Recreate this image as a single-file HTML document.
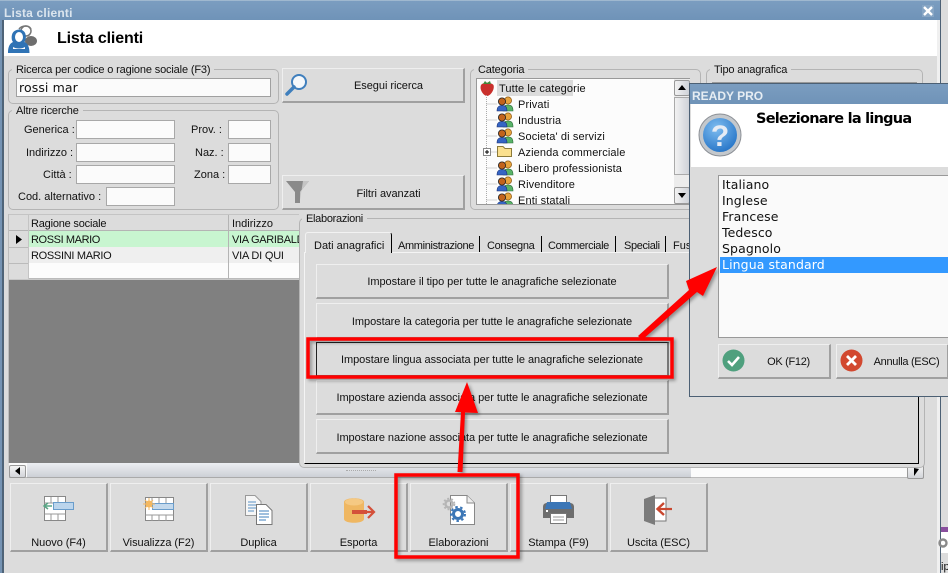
<!DOCTYPE html>
<html><head><meta charset="utf-8"><style>
html,body{margin:0;padding:0;width:948px;height:573px;overflow:hidden;background:#dcdcdc}
body{position:relative;font:11px "Liberation Sans",sans-serif;color:#111}
.a,.b,.i,.g,.t,.btn{position:absolute;box-sizing:border-box}
.t{white-space:nowrap;line-height:14px;margin-top:1px}
#tree .t{letter-spacing:.12px}
.tab{letter-spacing:-.35px}
.g{border:1px solid #b4b4b4;border-radius:5px}
.l{position:absolute;background:#dcdcdc;padding:0 4px;line-height:13px;top:-6px;white-space:nowrap;letter-spacing:-.15px;margin-left:-1px}
.i{background:#fbfbfb;border:1px solid #a8a8a8}
.btn{background:#dcdcdc;border-top:1px solid #efefef;border-left:1px solid #efefef;border-right:2px solid #a0a0a0;border-bottom:2px solid #a0a0a0;text-align:center;letter-spacing:-.05px;padding-top:1px}
.m{font-family:"DejaVu Sans",sans-serif;font-size:12.5px;line-height:16px;position:absolute;white-space:nowrap;letter-spacing:.1px}
svg{position:absolute;overflow:visible}
</style></head><body>
<svg width="0" height="0" style="position:absolute"><defs>
<g id="ppl"><circle cx="11" cy="4.5" r="3.6" fill="#e8a33c" stroke="#8a5a1a" stroke-width=".7"/><path d="M6 15c0-5 2-6 5-6s5 1 5 6z" fill="#58b368" stroke="#2d6e3a" stroke-width=".6"/><circle cx="5" cy="5.5" r="3.6" fill="#c2631c" stroke="#222" stroke-width=".8"/><path d="M0 15c0-4.500 2-5.500 5-5.500s5 1 5 5.500z" fill="#3565c4" stroke="#1b2f70" stroke-width=".6"/></g>
</defs></svg>

<!-- window chrome -->
<div class="a" style="left:0;top:0;width:941px;height:20px;background:linear-gradient(#7b9dc0,#6f93b8);border-top:1px solid #9fb8cf"></div>
<div class="a" style="left:0;top:20px;width:4px;height:553px;background:#7593b3"></div>
<div class="a" style="left:2px;top:20px;width:2px;height:553px;background:#4f6478"></div>
<div class="t" style="left:4px;top:5px;color:#dbe5ee;font-size:12px;font-weight:bold;letter-spacing:.2px">Lista clienti</div>
<div class="a" style="left:4px;top:20px;width:933px;height:36px;background:#fff"></div>
<div class="a" style="left:937px;top:20px;width:3px;height:553px;background:#f0f0f0"></div>
<div class="a" style="left:940px;top:0;width:1px;height:573px;background:#4c6074"></div>
<div class="a" style="left:922px;top:5px;width:12px;height:12px;background:#86a5c4"></div>
<svg style="left:924px;top:7px" width="8" height="8"><path d="M0 0L8 8M8 0L0 8" stroke="#fff" stroke-width="2.400"/></svg>
<svg style="left:7px;top:23px" width="30" height="30"><circle cx="19" cy="8" r="5" fill="#fff" stroke="#777" stroke-width="1.500"/><path d="M12 6c3-4 10-4 12 0" fill="none" stroke="#777" stroke-width="1.500"/><ellipse cx="24" cy="18" rx="6" ry="5" fill="#6e6e6e"/><path d="M1 30c0-8 3-10 5-11-2-2-2-9 1.500-11 3-2 7-2 9 0 3 2 3 9 1 11 2 1 5 3 5 11z" fill="#2f73b5"/><ellipse cx="12" cy="14" rx="4" ry="5" fill="#fff"/><path d="M6 24c3 2 9 2 12 0v2H6z" fill="#fff"/></svg>
<div class="t" style="left:57px;top:29px;font-size:16px;line-height:18px;font-weight:bold;color:#000;letter-spacing:-.15px">Lista clienti</div>

<!-- search groups -->
<div class="g" style="left:8px;top:69px;width:271px;height:35px"><div class="l" style="left:4px">Ricerca per codice o ragione sociale (F3)</div></div>
<div class="i" style="left:16px;top:78px;width:255px;height:19px;border:1px solid #a0a0a0"></div>
<div class="m" style="left:19px;top:80px">rossi mar</div>
<div class="g" style="left:8px;top:110px;width:271px;height:100px"><div class="l" style="left:4px">Altre ricerche</div></div>
<div class="i" style="left:76px;top:120px;width:99px;height:19px"></div>
<div class="i" style="left:76px;top:143px;width:99px;height:19px"></div>
<div class="i" style="left:76px;top:165px;width:99px;height:19px"></div>
<div class="i" style="left:106px;top:187px;width:69px;height:19px"></div>
<div class="i" style="left:228px;top:120px;width:43px;height:19px"></div>
<div class="i" style="left:228px;top:143px;width:43px;height:19px"></div>
<div class="i" style="left:228px;top:165px;width:43px;height:19px"></div>
<div class="t" style="left:24px;top:122px">Generica :</div>
<div class="t" style="left:26px;top:145px">Indirizzo :</div>
<div class="t" style="left:43px;top:167px">Città :</div>
<div class="t" style="left:18px;top:189px">Cod. alternativo :</div>
<div class="t" style="left:191px;top:122px">Prov. :</div>
<div class="t" style="left:195px;top:145px">Naz. :</div>
<div class="t" style="left:194px;top:167px">Zona :</div>

<!-- action buttons -->
<div class="btn" style="left:282px;top:68px;width:183px;height:35px;line-height:33px;padding-left:31px">Esegui ricerca</div>
<svg style="left:285px;top:73px" width="24" height="24"><circle cx="14" cy="9" r="7" fill="#f5f8fb" stroke="#3f7fbd" stroke-width="2"/><path d="M9 14L2 21" stroke="#3f7fbd" stroke-width="3.500" stroke-linecap="round"/></svg>
<div class="btn" style="left:282px;top:175px;width:183px;height:35px;line-height:34px;padding-left:31px">Filtri avanzati</div>
<svg style="left:285px;top:180px" width="24" height="24"><path d="M1 1H24L15 12V23H10V12Z" fill="#8a8a8a"/><path d="M18 1H24L15 12V20Z" fill="#c4c4c4"/></svg>

<!-- categoria -->
<div class="g" style="left:470px;top:69px;width:231px;height:141px"><div class="l" style="left:4px">Categoria</div></div>
<div class="a" style="left:476px;top:78px;width:214px;height:127px;background:#fcfcfc;border:1px solid #999;overflow:hidden" id="tree">
<div class="a" style="left:20px;top:1px;width:76px;height:16px;background:#dcdcdc"></div>
<svg style="left:3px;top:2px" width="15" height="15"><path d="M1 4C3 1 11 1 13.500 4 15 9 10 15 7 15 4 15-1 9 1 4Z" fill="#c9302c"/><path d="M3 3L5 0 7 2 10 0 11 3Z" fill="#3f8a3a"/></svg>
<div class="t" style="left:22px;top:2px">Tutte le categorie</div>
<svg style="left:9px;top:16px" width="20" height="125"><path d="M.5 0V118M.5 9H11M.5 25H11M.5 41H11M.5 57H11M.5 73H11M.5 89H11M.5 105H11M.5 121H11" stroke="#aaa" stroke-dasharray="1 1" fill="none"/></svg>
<svg style="left:20px;top:17px" width="16" height="16"><use href="#ppl"/></svg>
<svg style="left:20px;top:33px" width="16" height="16"><use href="#ppl"/></svg>
<svg style="left:20px;top:49px" width="16" height="16"><use href="#ppl"/></svg>
<svg style="left:20px;top:81px" width="16" height="16"><use href="#ppl"/></svg>
<svg style="left:20px;top:97px" width="16" height="16"><use href="#ppl"/></svg>
<svg style="left:20px;top:113px" width="16" height="16"><use href="#ppl"/></svg>
<svg style="left:20px;top:65px" width="16" height="14"><path d="M.5 2.500H6L8 4.500H14.500V12.500H.5Z" fill="#fbe08e" stroke="#8c7a3a"/></svg>
<svg style="left:6px;top:69px" width="8" height="8"><rect x=".5" y=".5" width="7" height="7" fill="#fff" stroke="#888"/><path d="M2 4H6M4 2V6" stroke="#000"/></svg>
<div class="t" style="left:41px;top:18px">Privati</div>
<div class="t" style="left:41px;top:34px">Industria</div>
<div class="t" style="left:41px;top:50px">Societa' di servizi</div>
<div class="t" style="left:41px;top:66px">Azienda commerciale</div>
<div class="t" style="left:41px;top:82px">Libero professionista</div>
<div class="t" style="left:41px;top:98px">Rivenditore</div>
<div class="t" style="left:41px;top:114px">Enti statali</div>
</div>
<div class="a" style="left:674px;top:79px;width:16px;height:125px;background:#ececec"></div>
<div class="a" style="left:674px;top:80px;width:16px;height:16px;background:linear-gradient(90deg,#f2f2f2,#cfd2d8);border:1px solid #999;border-radius:2px"></div>
<div class="a" style="left:674px;top:97px;width:16px;height:78px;background:linear-gradient(90deg,#f2f2f2,#cfd2d8);border:1px solid #aaa"></div>
<div class="a" style="left:674px;top:187px;width:16px;height:17px;background:linear-gradient(90deg,#f2f2f2,#cfd2d8);border:1px solid #999;border-radius:2px"></div>
<svg style="left:678px;top:85px" width="8" height="5"><path d="M0 5L4 0L8 5Z" fill="#000"/></svg>
<svg style="left:678px;top:193px" width="8" height="5"><path d="M0 0L4 5L8 0Z" fill="#000"/></svg>

<!-- tipo anagrafica -->
<div class="g" style="left:706px;top:69px;width:217px;height:141px"><div class="l" style="left:4px">Tipo anagrafica</div></div>
<div class="a" style="left:712px;top:82px;width:205px;height:2px;background:#999"></div>

<!-- grid -->
<div class="a" style="left:9px;top:280px;width:290px;height:183px;background:#808080"></div>
<div class="a" style="left:8px;top:214px;width:291px;height:1px;background:#c4c4c4"></div>
<div class="a" style="left:8px;top:214px;width:1px;height:249px;background:#bdbdbd"></div>
<div class="a" style="left:9px;top:215px;width:290px;height:16px;background:#dcdcdc;border-bottom:1px solid #b4b4b4"></div>
<div class="a" style="left:29px;top:231px;width:270px;height:16px;background:#c8f5d0"></div>
<div class="a" style="left:29px;top:247px;width:270px;height:16px;background:#efefef"></div>
<div class="a" style="left:29px;top:263px;width:270px;height:16px;background:#fcfcfc;border-bottom:1px solid #bbb"></div>
<div class="a" style="left:9px;top:231px;width:20px;height:48px;background:#dcdcdc"></div>
<div class="a" style="left:9px;top:247px;width:20px;height:1px;background:#bbb"></div>
<div class="a" style="left:9px;top:263px;width:20px;height:1px;background:#bbb"></div>
<div class="a" style="left:9px;top:279px;width:290px;height:1px;background:#c8c8c8"></div>
<div class="a" style="left:28px;top:215px;width:1px;height:64px;background:#c4c4c4"></div>
<div class="a" style="left:228px;top:215px;width:1px;height:64px;background:#b4b4b4"></div>
<svg style="left:16px;top:235px" width="6" height="9"><path d="M0 0L6 4.500L0 9Z" fill="#000"/></svg>
<div class="t" style="left:31px;top:216px;letter-spacing:-.2px">Ragione sociale</div>
<div class="t" style="left:232px;top:216px">Indirizzo</div>
<div class="t" style="left:31px;top:232px;letter-spacing:-.4px">ROSSI MARIO</div>
<div class="a" style="left:229px;top:232px;width:70px;height:15px;overflow:hidden"><div class="t" style="left:3px;top:0;letter-spacing:-.3px">VIA GARIBALDI</div></div>
<div class="t" style="left:31px;top:248px;letter-spacing:-.3px">ROSSINI MARIO</div>
<div class="t" style="left:232px;top:248px;letter-spacing:-.2px">VIA DI QUI</div>

<!-- horizontal scrollbar -->
<div class="a" style="left:9px;top:463px;width:915px;height:15px;background:#fbfbfb;border-bottom:1px solid #bbb"></div>
<div class="a" style="left:27px;top:463px;width:664px;height:15px;background:linear-gradient(#eceef2,#cdd0d6);border-bottom:1px solid #aaa"></div>
<div class="a" style="left:9px;top:465px;width:17px;height:13px;background:linear-gradient(#f4f4f4,#d2d4d9);border:1px solid #999;border-radius:2px"></div>
<svg style="left:15px;top:467px" width="5" height="8"><path d="M5 0L0 4L5 8Z" fill="#000"/></svg>
<div class="a" style="left:907px;top:465px;width:17px;height:14px;background:linear-gradient(#f4f4f4,#d2d4d9);border:1px solid #999;border-radius:2px"></div>
<svg style="left:914px;top:468px" width="5" height="8"><path d="M0 0L5 1L0 8Z" fill="#000"/></svg>

<!-- elaborazioni -->
<div class="g" style="left:299px;top:218px;width:626px;height:250px;background:#dcdcdc;z-index:1"><div class="l" style="left:3px;top:-6px;letter-spacing:-.3px">Elaborazioni</div></div>
<div style="position:absolute;left:0;top:0;z-index:2">
<div class="a" style="left:304px;top:252px;width:615px;height:212px;border-top:1px solid #f4f4f4;border-left:1px solid #f4f4f4;border-right:1px solid #000;border-bottom:1px solid #000"></div>
<div class="a" style="left:305px;top:232px;width:87px;height:21px;background:#dcdcdc;border-top:1px solid #f2f2f2;border-left:1px solid #f2f2f2;border-right:1px solid #000;border-radius:3px 3px 0 0"></div>
<div class="t" style="left:314px;top:238px">Dati anagrafici</div>
<div class="t tab" style="left:398px;top:238px">Amministrazione</div>
<div class="a" style="left:479px;top:236px;width:1px;height:16px;background:#000"></div>
<div class="t tab" style="left:487px;top:238px">Consegna</div>
<div class="a" style="left:541px;top:236px;width:1px;height:16px;background:#000"></div>
<div class="t tab" style="left:548px;top:238px">Commerciale</div>
<div class="a" style="left:615px;top:236px;width:1px;height:16px;background:#000"></div>
<div class="t tab" style="left:624px;top:238px">Speciali</div>
<div class="a" style="left:665px;top:236px;width:1px;height:16px;background:#000"></div>
<div class="t" style="left:673px;top:238px">Fus</div>
<div class="btn" style="left:316px;top:264px;width:353px;height:35px;line-height:33px">Impostare il tipo per tutte le anagrafiche selezionate</div>
<div class="btn" style="left:316px;top:303px;width:353px;height:36px;line-height:34px">Impostare la categoria per tutte le anagrafiche selezionate</div>
<div class="btn" style="left:316px;top:342px;width:353px;height:35px;line-height:32px;border:1px solid #222;border-right:2px solid #777;border-bottom:2px solid #777">Impostare lingua associata per tutte le anagrafiche selezionate</div>
<div class="btn" style="left:316px;top:380px;width:353px;height:35px;line-height:33px">Impostare azienda associata per tutte le anagrafiche selezionate</div>
<div class="btn" style="left:316px;top:419px;width:353px;height:35px;line-height:34px">Impostare nazione associata per tutte le anagrafiche selezionate</div>
</div>

<!-- bottom buttons -->
<div style="position:absolute;left:0;top:0;z-index:2">
<div class="btn" style="left:10px;top:483px;width:98px;height:69px;padding-top:52px;line-height:14px">Nuovo (F4)</div>
<div class="btn" style="left:110px;top:483px;width:98px;height:69px;padding-top:52px;line-height:14px">Visualizza (F2)</div>
<div class="btn" style="left:210px;top:483px;width:98px;height:69px;padding-top:52px;line-height:14px">Duplica</div>
<div class="btn" style="left:310px;top:483px;width:98px;height:69px;padding-top:52px;line-height:14px">Esporta</div>
<div class="btn" style="left:410px;top:483px;width:98px;height:69px;padding-top:52px;line-height:14px">Elaborazioni</div>
<div class="btn" style="left:510px;top:483px;width:98px;height:69px;padding-top:52px;line-height:14px">Stampa (F9)</div>
<div class="btn" style="left:610px;top:483px;width:98px;height:69px;padding-top:52px;line-height:14px">Uscita (ESC)</div>
<!-- nuovo -->
<svg style="left:43px;top:496px" width="32" height="26"><rect x="1.500" y=".500" width="21" height="24" fill="#fff" stroke="#888"/><path d="M1.500 7H22.500M1.500 18H22.500M8 1V7M15 1V7M8 18V24M15 18V24" stroke="#999"/><rect x="10.500" y="6.500" width="20" height="7" fill="#bcd5ec" stroke="#6a9dcb"/><path d="M1 10H9M5 7L1 10L5 13" fill="none" stroke="#5aa585" stroke-width="1.500"/></svg>
<!-- visualizza -->
<svg style="left:144px;top:497px" width="31" height="26"><rect x="1.500" y=".500" width="28" height="23" fill="#fff" stroke="#888"/><path d="M1.500 7H29.500M1.500 18H29.500M8 1V7M15 1V7M22 1V7M8 18V24M15 18V24M22 18V24" stroke="#999"/><rect x="8.500" y="6.500" width="21" height="6" fill="#c4d9ec" stroke="#6a9dcb"/><circle cx="5" cy="7" r="3.500" fill="#f4b860"/><path d="M5 1V13M-1 7H11M1 3L9 11M9 3L1 11" stroke="#f4b860"/></svg>
<!-- duplica -->
<svg style="left:245px;top:495px" width="28" height="30"><path d="M.5.500H10L16 6.500V20.500H.5Z" fill="#f6f6f6" stroke="#999"/><path d="M3 7H11M3 10H11M3 13H11M3 16H9" stroke="#5b93c7"/><path d="M11.500 9.500H21L27 15.500V29.500H11.500Z" fill="#fff" stroke="#777"/><path d="M14 16H24M14 19H24M14 22H24M14 25H21" stroke="#3f7fbd"/></svg>
<!-- esporta -->
<svg style="left:344px;top:497px" width="32" height="27"><path d="M0 5C0 0 20 0 20 5V22C20 27 0 27 0 22Z" fill="#efb762"/><ellipse cx="10" cy="5" rx="9" ry="3.500" fill="#f5c983"/><path d="M8 15H30M24 9L30 15L24 21" fill="none" stroke="#d4503a" stroke-width="2.200"/><path d="M8 13H23V17H8Z" fill="#d4503a"/></svg>
<!-- elaborazioni -->
<svg style="left:443px;top:495px" width="32" height="30"><path d="M7.500.500H24L31.500 8V29.500H7.500Z" fill="#fff" stroke="#888"/><path d="M24 .5V8H31.500" fill="#eee" stroke="#888"/><circle cx="6" cy="9" r="3.500" fill="none" stroke="#b5b5b5" stroke-width="2.400"/><circle cx="6" cy="9" r="5.500" fill="none" stroke="#b5b5b5" stroke-width="1.600" stroke-dasharray="2 2"/><circle cx="15" cy="19" r="4.500" fill="none" stroke="#3b76b6" stroke-width="3"/><circle cx="15" cy="19" r="7" fill="none" stroke="#3b76b6" stroke-width="2" stroke-dasharray="2.500 2.500"/></svg>
<!-- stampa -->
<svg style="left:543px;top:495px" width="31" height="29"><rect x="7.500" y=".500" width="16" height="8" fill="#fff" stroke="#777"/><path d="M0 12C0 9 2 8 4 8H27C29 8 31 9 31 12V23H0Z" fill="#6d6d6d"/><path d="M4 7H27L29 14H2Z" fill="#3b76b6"/><rect x="7.500" y="18.500" width="16" height="10" fill="#fff" stroke="#777"/><path d="M10 22H21M10 25H21" stroke="#999"/><rect x="3" y="15" width="2" height="2" fill="#fff"/></svg>
<!-- uscita -->
<svg style="left:644px;top:495px" width="30" height="30"><rect x="7" y="3" width="15" height="23" fill="#fff" stroke="#777"/><path d="M0 4L11 0V30L0 26Z" fill="#7b7b7b"/><path d="M14 14H28" stroke="#c9472f" stroke-width="2.200"/><path d="M20 8L13.500 14L20 20" fill="none" stroke="#c9472f" stroke-width="2.400"/></svg>
<div class="a" style="left:346px;top:470px;width:30px;height:1px;border-top:1px dotted #aaa"></div>
</div>

<!-- right remnants -->
<div class="a" style="left:941px;top:527px;width:7px;height:5px;background:#8a4f9e"></div>
<div class="a" style="left:941px;top:532px;width:7px;height:21px;background:#fff"></div>
<svg style="left:941px;top:537px" width="7" height="12"><circle cx="2" cy="6" r="3.500" fill="none" stroke="#8a8a8a" stroke-width="2.400"/></svg>
<div class="t" style="left:941px;top:559px">ip</div>

<!-- dialog -->
<div class="a" style="left:689px;top:83px;width:270px;height:314px;background:#dcdcdc;border:1px solid #4c6074;z-index:5">
<div class="a" style="left:0;top:0;width:268px;height:20px;background:linear-gradient(#7b9dc0,#6f93b8)"></div>
<div class="t" style="left:2px;top:4px;font-weight:bold;color:#e6edf3;font-size:12px">READY PRO</div>
<div class="a" style="left:1px;top:20px;width:267px;height:63px;background:#fff"></div>
<div class="t" style="left:66px;top:26px;font-size:14.500px;line-height:17px;font-weight:bold;color:#000;font-family:'DejaVu Sans',sans-serif;letter-spacing:-.75px">Selezionare la lingua</div>
<svg style="left:8px;top:29px" width="44" height="44"><defs><radialGradient id="q" cx=".4" cy=".3" r=".8"><stop offset="0" stop-color="#7fbdf0"/><stop offset="1" stop-color="#1f6fc4"/></radialGradient></defs><circle cx="22" cy="22" r="21" fill="#c4c8cc" stroke="#8c9096"/><circle cx="22" cy="22" r="17" fill="url(#q)"/><text x="22" y="33" font-family="Liberation Sans,sans-serif" font-size="30" font-weight="bold" text-anchor="middle" fill="#e6ecf5">?</text></svg>
<div class="a" style="left:28px;top:91px;width:240px;height:163px;background:#fafafa;border:1px solid #999"></div>
<div class="a" style="left:30px;top:173px;width:240px;height:16px;background:#3399ff"></div>
<div class="m" style="left:32px;top:93px">Italiano</div>
<div class="m" style="left:32px;top:109px">Inglese</div>
<div class="m" style="left:32px;top:125px">Francese</div>
<div class="m" style="left:32px;top:141px">Tedesco</div>
<div class="m" style="left:32px;top:157px">Spagnolo</div>
<div class="m" style="left:32px;top:173px;color:#fff">Lingua standard</div>
<div class="btn" style="left:28px;top:260px;width:113px;height:35px;line-height:33px;padding-left:29px;letter-spacing:-.3px">OK (F12)</div>
<div class="btn" style="left:146px;top:260px;width:113px;height:35px;line-height:33px;padding-left:29px;letter-spacing:-.3px">Annulla (ESC)</div>
<svg style="left:32px;top:265px" width="23" height="23"><circle cx="11.500" cy="11.500" r="11" fill="#4fa07e"/><path d="M6 12L10 16L17 8" fill="none" stroke="#fff" stroke-width="2.600"/></svg>
<svg style="left:150px;top:265px" width="23" height="23"><circle cx="11.500" cy="11.500" r="11" fill="#d2482f"/><path d="M7 7L16 16M16 7L7 16" fill="none" stroke="#fff" stroke-width="2.800"/></svg>
</div>

<!-- red annotations -->
<svg style="left:0;top:0;z-index:6;filter:drop-shadow(2px 2px 1.500px rgba(0,0,0,.35))" width="948" height="573">
<rect x="308" y="339" width="364" height="38" fill="none" stroke="#f00" stroke-width="3.500"/>
<rect x="396" y="475" width="122" height="82" fill="none" stroke="#f00" stroke-width="3.500"/>
<path d="M457.500 472L461 412H455L467 382L478 413L465 412.500L462.500 472Z" fill="#f00"/>
<path d="M638 336L689 290L686 281L717 267L703 296L697 292L642 340Z" fill="#f00"/>
</svg>
</body></html>
